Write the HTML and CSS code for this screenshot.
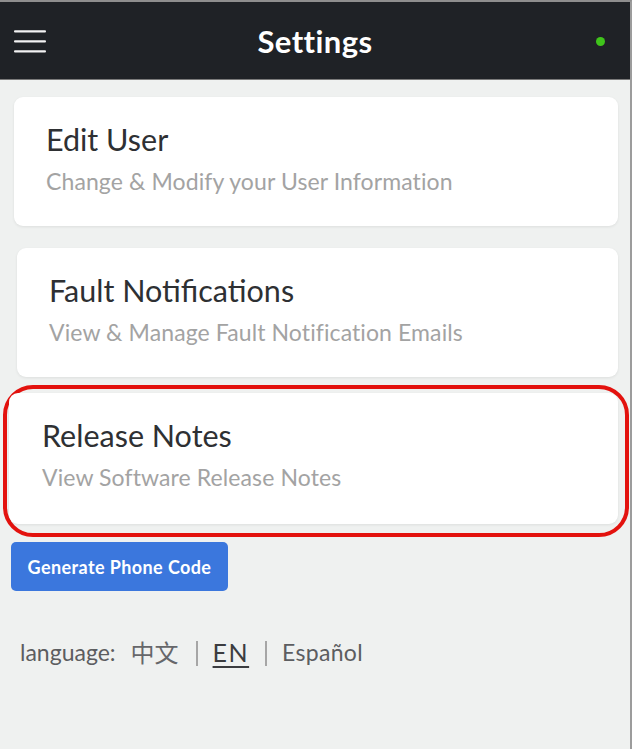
FILE: index.html
```html
<!DOCTYPE html>
<html>
<head>
<meta charset="utf-8">
<link rel="stylesheet" href="styles.css">
</head>
<body>
<div class="frame">
  <header class="topbar">
    <svg class="menu" width="32" height="24" viewBox="0 0 32 24">
      <rect x="0" y="1.2" width="32" height="2.4" rx="1" fill="#f2f2f2"/>
      <rect x="0" y="11.2" width="32" height="2.4" rx="1" fill="#f2f2f2"/>
      <rect x="0" y="21.2" width="32" height="2.4" rx="1" fill="#f2f2f2"/>
    </svg>
    <h1 class="title">Settings</h1>
    <span class="status-dot"></span>
  </header>
  <main class="content">
    <div class="card card-edit">
      <div class="card-title">Edit User</div>
      <div class="card-sub">Change &amp; Modify your User Information</div>
    </div>
    <div class="card card-fault">
      <div class="card-title">Fault Notifications</div>
      <div class="card-sub">View &amp; Manage Fault Notification Emails</div>
    </div>
    <div class="highlight">
      <div class="card card-release">
        <div class="card-title">Release Notes</div>
        <div class="card-sub">View Software Release Notes</div>
      </div>
    </div>
    <button class="btn">Generate Phone Code</button>
    <div class="lang">
      <span class="lang-label">language:</span>
      <span class="lang-opt zh">中文</span>
      <span class="sep"></span>
      <span class="lang-opt active">EN</span>
      <span class="sep"></span>
      <span class="lang-opt es">Español</span>
    </div>
  </main>
</div>
</body>
</html>
```

FILE: styles.css
```css
html, body {
  margin: 0;
  padding: 0;
  background: #eff1f0;
}
body {
  font-family: Lato, "Noto Sans", sans-serif;
}
.frame {
  width: 630px;
  height: 747px;
  border-top: 2px solid #8e8e8e;
  border-right: 2px solid #9c9c9c;
  background: #eff1f0;
  overflow: hidden;
}
.topbar {
  height: 78px;
  background: #1f2226;
  border-bottom: 1px solid #7a7a7a;
  display: flex;
  align-items: center;
  position: relative;
  padding: 0 14px;
  box-sizing: border-box;
}
.menu {
  display: block;
}
.title {
  position: absolute;
  left: 0;
  right: 0;
  margin: 0;
  text-align: center;
  color: #fff;
  font-size: 31px;
  font-weight: 700;
  letter-spacing: 0.4px;
  line-height: 78px;
  pointer-events: none;
}
.status-dot {
  margin-left: auto;
  margin-right: 11px;
  width: 9px;
  height: 9px;
  border-radius: 50%;
  background: #3fc41b;
  margin-top: 1px;
}
.content {
  display: flex;
  flex-direction: column;
  align-items: flex-start;
  padding-top: 17px;
}
.card {
  background: #fff;
  border-radius: 9px;
  box-shadow: 0 1px 3px rgba(0,0,0,0.08);
  box-sizing: border-box;
  height: 129px;
  padding: 24px 32px 0;
}
.card-edit {
  margin-left: 14px;
  width: 604px;
}
.card-fault {
  margin-left: 17px;
  width: 601px;
  margin-top: 22px;
}
.card-title {
  font-size: 30.5px;
  color: #2e3033;
  line-height: 36px;
}
.card-sub {
  font-size: 23px;
  letter-spacing: 0.1px;
  color: #a3a3a3;
  line-height: 28px;
  margin-top: 10px;
}
.highlight {
  margin-top: 8px;
  margin-left: 3px;
  width: 626px;
  height: 152px;
  box-sizing: border-box;
  border: 4px solid #e3120e;
  border-radius: 30px;
  padding: 4px 7px 0 2px;
}
.card-release {
  width: 100%;
  height: 131px;
  padding-left: 33px;
  padding-top: 24px;
}
.btn {
  margin-top: 5px;
  margin-left: 11px;
  width: 217px;
  height: 49px;
  background: #3b77dd;
  border: none;
  border-radius: 5px;
  color: #fff;
  font-family: Lato, "Noto Sans", sans-serif;
  font-weight: 700;
  font-size: 18px;
  letter-spacing: 0.4px;
  padding: 0;
}
.lang {
  margin-top: 46px;
  margin-left: 20px;
  display: flex;
  align-items: center;
  font-size: 23px;
  color: #5c5d60;
  line-height: 30px;
}
.lang-label {
  margin-right: 15px;
}
.zh {
  font-family: "Noto Sans CJK SC", sans-serif;
  font-size: 24px;
  line-height: 30px;
  color: #66676a;
}
.sep {
  display: inline-block;
  width: 2px;
  height: 25px;
  background: #a6a6a6;
  margin: 2px 15px 0 17px;
}
.active {
  text-decoration: underline;
  text-decoration-thickness: 2px;
  text-underline-offset: 4px;
  color: #3b3c3f;
  font-size: 25px;
  letter-spacing: 1.5px;
  margin-right: -1px;
}
.es {
  letter-spacing: 0.3px;
}
```
